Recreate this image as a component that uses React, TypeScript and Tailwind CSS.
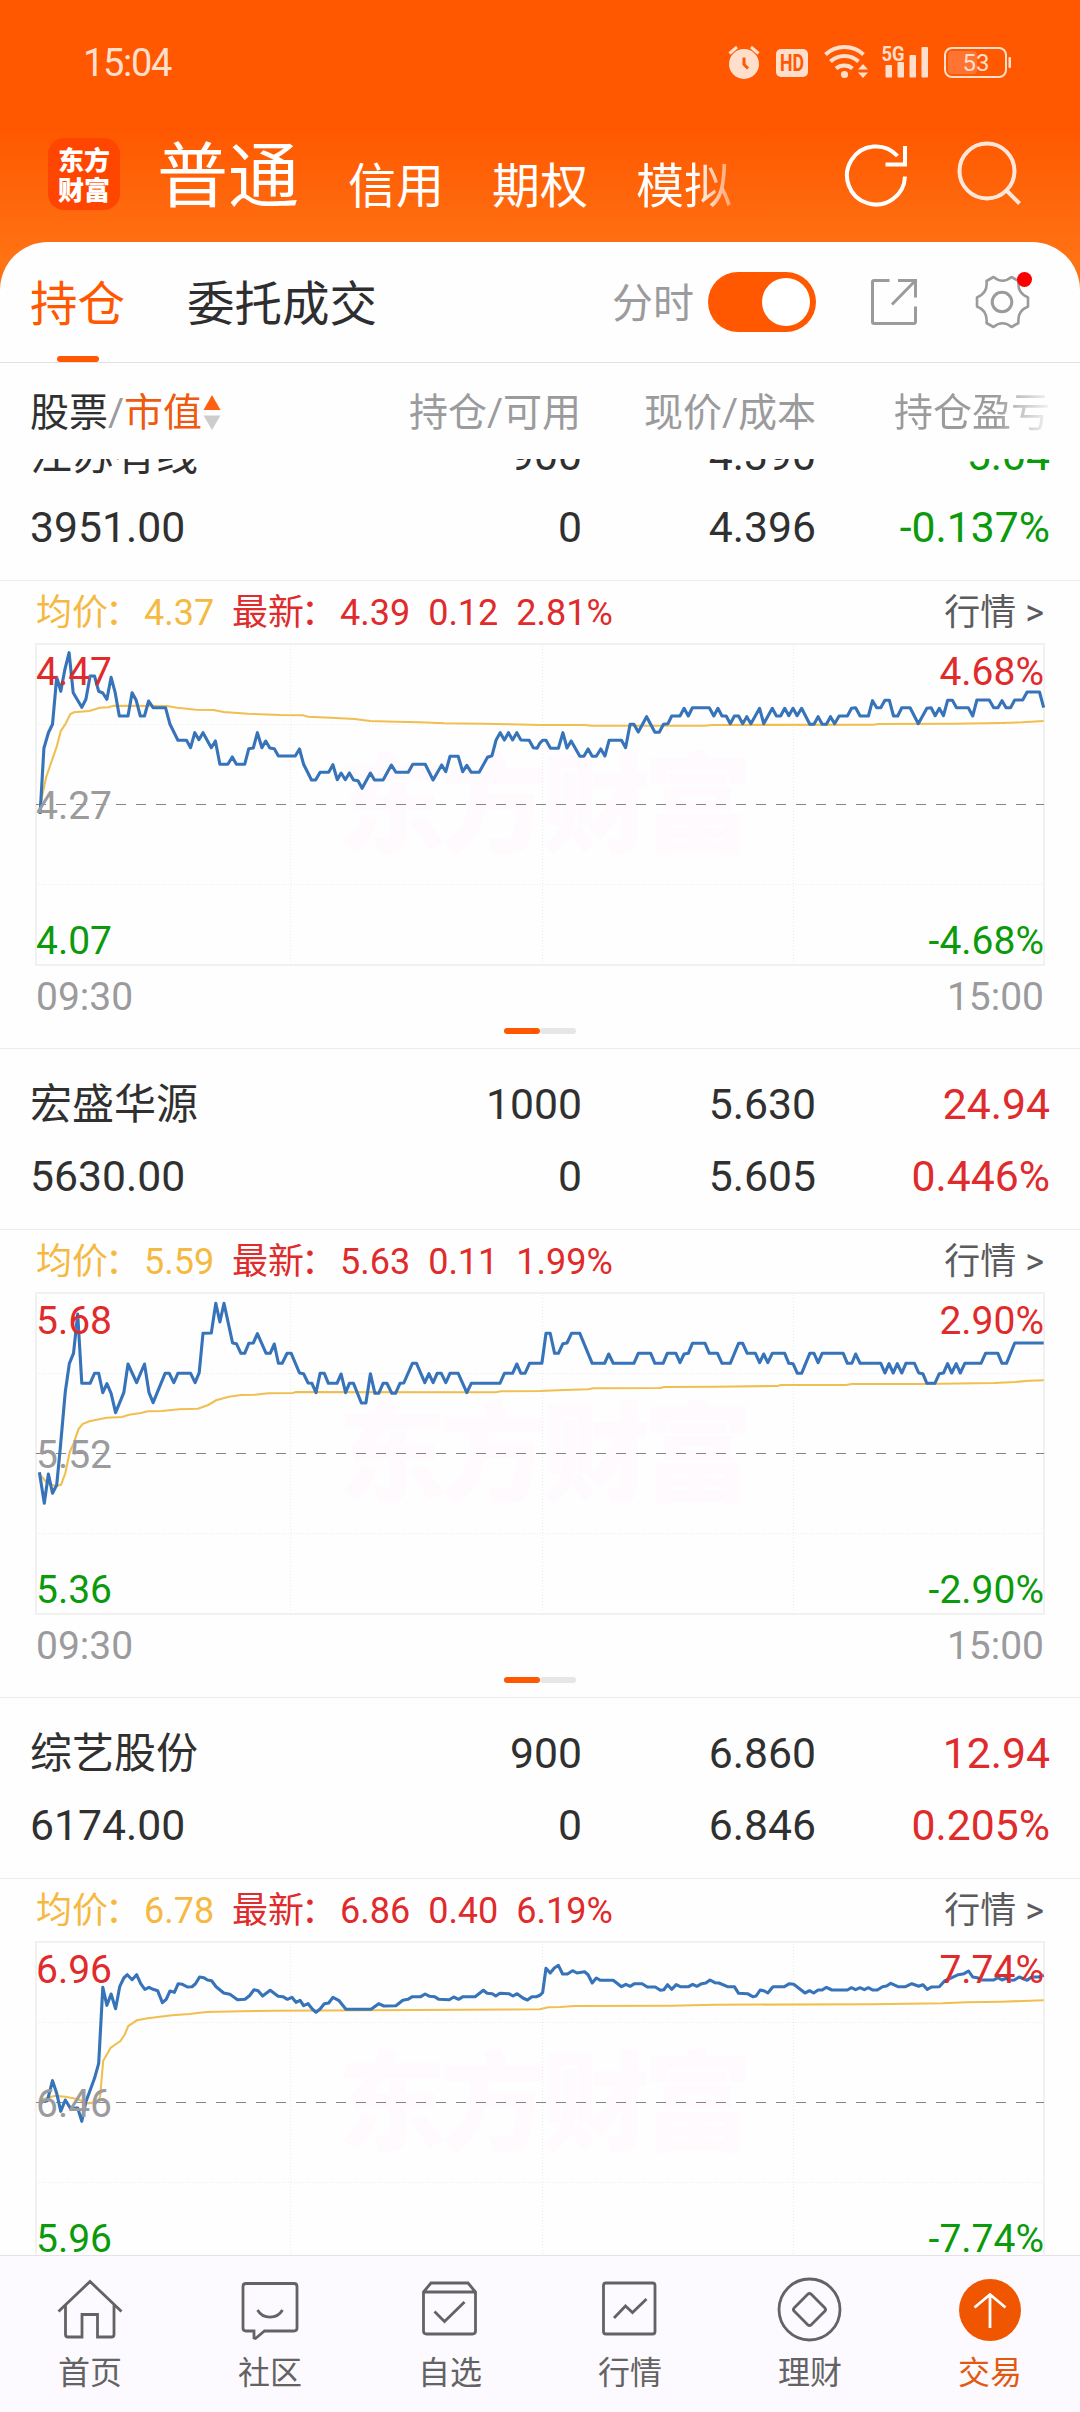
import React from "react";

type Half = string;

interface Holding {
  name: string;
  value: string;
  amount: string;
  usable: string;
  price: string;
  cost: string;
  profit: string;
  rate: string;
  up: boolean;
  avg: string;
  last: string;
  change: string;
  percent: string;
  high: string;
  mid: string;
  low: string;
  span: string;
  baseline: number;
  priceAm: Half;
  pricePm: Half;
  avgAm: Half;
  avgPm: Half;
}

const HOLDINGS: Holding[] = [
  {
    name: "江苏有线",
    value: "3951.00",
    amount: "900",
    usable: "0",
    price: "4.390",
    cost: "4.396",
    profit: "-5.04",
    rate: "-0.137%",
    up: false,
    avg: "4.37",
    last: "4.39",
    change: "0.12",
    percent: "2.81%",
    high: "4.47",
    mid: "4.27",
    low: "4.07",
    span: "4.68%",
    baseline: 219,
    priceAm:
      "117,732 128,535 141,488 153,463 165,322 177,364 189,298 201,248 213,368 238,412 250,388 262,318 275,318 287,364 299,369 311,388 323,322 335,368 347,438 372,438 384,368 396,391 408,438 420,438 432,393 445,413 481,413 494,463 517,511 542,511 554,533 566,488 578,509 590,488 614,533 626,513 639,583 662,583 675,561 687,583 711,583 723,536 736,534 748,488 761,533 772,513 784,534 797,536 809,558 858,558 870,537 882,583 905,630 917,630 930,607 955,607 967,584 980,629 991,609 1003,629 1015,609 1027,630 1040,632 1052,655 1076,609 1088,630 1113,630 1137,585 1150,607 1186,607 1199,583 1235,583 1258,630 1283,585 1295,605 1307,559 1331,559 1344,605 1356,586 1369,607 1392,607 1416,562 1429,557 1441,510 1453,488 1465,510 1477,488 1489,510 1501,488 1513,510 1537,511 1549,533 1560,535 1568,520",
    pricePm:
      "8,511 18,511 31,535 54,535 67,488 79,534 91,513 116,559 128,559 140,537 152,559 164,559 177,537 189,558 201,511 237,511 249,533 262,463 273,463 286,486 310,440 334,487 347,487 359,463 372,461 383,438 407,438 419,415 431,438 443,413 492,413 505,438 517,415 529,438 541,438 553,461 565,438 577,438 589,461 601,440 613,461 638,415 650,461 675,415 687,438 699,438 711,415 723,437 735,415 747,437 760,415 784,463 796,463 808,440 820,463 832,463 844,440 856,461 869,438 893,438 905,415 917,413 930,438 954,438 966,392 978,413 990,413 1002,391 1015,391 1027,438 1039,438 1051,413 1075,413 1099,461 1124,415 1136,413 1148,437 1160,415 1172,437 1184,391 1198,391 1210,413 1244,413 1257,438 1269,390 1305,390 1318,413 1330,413 1342,392 1354,413 1367,413 1379,390 1402,390 1415,366 1451,366 1463,413",
    avgAm:
      "117,705 135,620 165,530 177,483 190,463 205,432 215,427 260,423 290,413 315,412 330,407 485,408 515,413 570,419 620,420 650,426 720,431 815,435 880,436 895,440 960,443 1030,447 1075,453 1150,455 1220,457 1290,460 1400,461 1480,463 1568,465",
    avgPm: "130,465 150,467 480,467 500,465 970,464 980,462 1200,461 1340,459 1400,457 1463,453",
  },
  {
    name: "宏盛华源",
    value: "5630.00",
    amount: "1000",
    usable: "0",
    price: "5.630",
    cost: "5.605",
    profit: "24.94",
    rate: "0.446%",
    up: true,
    avg: "5.59",
    last: "5.63",
    change: "0.11",
    percent: "1.99%",
    high: "5.68",
    mid: "5.52",
    low: "5.36",
    span: "2.90%",
    baseline: 216,
    priceAm:
      "115,757 129,850 141,762 153,820 165,795 175,690 190,515 202,430 214,400 226,282 238,490 262,490 275,460 287,460 299,518 311,491 323,520 336,578 360,518 372,432 397,488 420,432 433,518 445,548 480,460 492,460 505,488 517,460 554,460 567,488 579,458 590,340 614,339 627,250 639,306 651,250 676,369 687,371 700,400 711,400 723,370 736,369 748,341 773,400 785,400 797,372 809,430 820,430 834,400 846,400 870,459 882,461 895,489 906,490 918,518 930,460 942,460 954,490 979,490 991,462 1004,518 1015,490 1027,490 1050,549 1063,549 1076,461 1089,520 1100,520 1113,490 1124,490 1138,520 1149,520 1162,490 1173,489 1198,430 1210,430 1234,488 1246,461 1258,488 1270,460 1282,460 1295,488 1307,460 1331,460 1356,518 1369,490 1452,490 1465,460 1489,460 1501,432 1513,460 1525,460 1538,430 1568,430",
    pricePm:
      "6,430 18,340 30,340 43,400 54,400 67,371 79,369 92,340 116,340 152,430 188,430 200,402 213,430 273,430 286,400 322,400 334,430 358,430 370,400 395,400 407,428 419,402 431,400 443,370 480,370 492,400 516,400 529,430 553,430 577,370 589,370 602,400 626,400 638,428 650,402 662,428 675,400 711,400 723,430 735,431 748,460 760,460 784,400 796,400 808,428 820,400 881,400 893,430 906,430 917,402 930,430 990,430 1002,459 1014,431 1026,459 1038,431 1051,459 1063,430 1088,430 1100,459 1112,461 1124,490 1147,490 1160,461 1172,459 1184,431 1196,459 1209,431 1221,459 1234,430 1281,430 1294,400 1330,400 1342,430 1355,430 1379,369 1463,369",
    avgAm:
      "117,765 140,792 165,798 178,794 190,760 203,695 214,672 228,628 240,612 260,604 310,593 355,591 375,584 410,579 430,574 470,573 520,568 575,566 605,555 628,541 665,530 700,525 740,524 780,520 850,519 860,516 1440,517 1455,514 1568,513",
    avgPm:
      "70,510 140,508 155,505 350,504 360,501 510,500 690,498 700,495 890,495 905,492 1110,492 1320,489 1380,486 1420,482 1463,481",
  },
  {
    name: "综艺股份",
    value: "6174.00",
    amount: "900",
    usable: "0",
    price: "6.860",
    cost: "6.846",
    profit: "12.94",
    rate: "0.205%",
    up: true,
    avg: "6.78",
    last: "6.86",
    change: "0.40",
    percent: "6.19%",
    high: "6.96",
    mid: "6.46",
    low: "5.96",
    span: "7.74%",
    baseline: 213,
    priceAm:
      "117,696 138,692 153,632 165,670 177,724 190,690 205,715 226,714 238,754 250,695 275,625 287,580 299,352 311,406 323,372 336,416 348,350 360,324 370,314 384,329 397,314 409,341 421,358 433,352 445,358 458,362 472,398 483,388 494,363 507,367 518,341 530,343 545,351 558,350 568,341 580,321 592,323 603,330 615,332 628,350 650,369 668,373 690,389 712,388 725,377 738,359 750,362 763,378 785,361 808,379 822,380 835,388 848,382 860,397 872,391 882,407 895,401 908,418 918,427 930,417 942,401 955,399 967,382 985,392 1005,418 1078,418 1100,401 1115,408 1150,407 1170,391 1185,388 1198,380 1222,380 1235,372 1248,379 1262,380 1275,388 1305,389 1318,381 1332,388 1345,380 1380,380 1404,361 1415,370 1430,371 1440,378 1452,370 1478,371 1490,378 1502,371 1520,385 1532,390 1545,380 1558,380 1568,376",
    pricePm:
      "8,368 18,295 30,309 42,294 54,286 66,312 80,312 95,302 108,309 130,305 140,314 152,339 164,324 176,331 213,331 237,350 250,343 262,349 275,341 297,341 312,351 335,351 350,361 360,359 371,344 383,358 396,344 408,350 432,350 444,343 456,349 470,341 482,339 494,330 508,338 520,339 545,350 565,350 577,370 603,371 618,380 628,378 640,360 652,363 662,369 677,350 710,350 725,341 737,343 770,369 783,362 795,369 808,360 820,360 832,352 848,360 893,360 905,353 917,359 930,353 942,359 954,353 966,360 980,360 995,350 1007,348 1019,340 1040,350 1062,350 1080,341 1100,349 1112,344 1125,358 1137,351 1160,350 1175,333 1198,322 1215,314 1232,311 1245,303 1257,321 1270,323 1282,330 1318,330 1330,323 1342,330 1354,325 1366,331 1378,330 1392,321 1415,331 1428,321 1450,321 1463,315",
    avgAm:
      "117,690 160,677 190,680 225,687 255,700 283,696 291,680 300,572 322,533 350,513 362,495 373,468 398,451 430,445 500,436 550,432 600,426 700,424 800,422 1568,418",
    avgPm: "25,412 60,411 100,408 380,407 510,404 960,403 1170,400 1240,397 1340,395 1463,391",
  },
];

// Samples are kept per trading session (morning / afternoon) and joined into one trace.
const X_UNIT = 1568 / 540;
function trace(am: Half, pm: Half, baseline: number) {
  const read = (s: Half, dx: number) =>
    s.split(" ").map((p) => {
      const [x, y] = p.split(",").map(Number);
      return `${((x + dx) / X_UNIT).toFixed(1)},${((y - baseline) / 3).toFixed(1)}`;
    });
  return [...read(am, -105), ...read(pm, 1463)].join(" ");
}

function Chart({ h }: { h: Holding }) {
  return (
    <svg width="1008" height="323" viewBox="0 0 1008 323" className="block overflow-visible">
      <text
        x="509"
        y="201"
        textAnchor="middle"
        textLength="414"
        className="fill-[#fefafe] font-['Noto_Sans_CJK_SC',sans-serif] text-[108px] font-black"
      >
        东方财富
      </text>
      <rect x="0" y="1" width="1008" height="321" fill="none" stroke="#f1f1f2" strokeWidth="2" />
      <g stroke="#ececee" strokeWidth="1" strokeDasharray="1 2">
        <path d="M0 81.5H1008M0 241.5H1008M254.500 0V322M506.500 0V322M757.500 0V322" />
      </g>
      <path d="M0 161.500H1008" stroke="#858587" strokeWidth="1.2" strokeDasharray="10 10" />
      <polyline points={trace(h.avgAm, h.avgPm, h.baseline)} fill="none" stroke="#f0bf50" strokeWidth="2.1" />
      <polyline
        points={trace(h.priceAm, h.pricePm, h.baseline)}
        fill="none"
        stroke="#3673b9"
        strokeWidth="3.1"
        strokeLinejoin="round"
      />
      <g className="text-[39px]">
        <text x="0" y="42" fill="#df2b2b">{h.high}</text>
        <text x="0" y="176" fill="#9b9b9d">{h.mid}</text>
        <text x="0" y="311" fill="#0b9a0b">{h.low}</text>
        <text x="1008" y="42" textAnchor="end" fill="#df2b2b">{h.span}</text>
        <text x="1008" y="311" textAnchor="end" fill="#0b9a0b">-{h.span}</text>
      </g>
    </svg>
  );
}

// Full-width colon set close to the label before it, keeping its full advance.
function Colon() {
  return <span className="inline-block w-[1em] -indent-[3px]">：</span>;
}

function HoldingCard({ h }: { h: Holding }) {
  const tone = h.up ? "text-[#df2b2b]" : "text-[#0b9a0b]";
  const row = "grid h-[72px] grid-cols-[270px_282px_234px_1fr] items-center";
  return (
    <section className="h-[649px] border-b border-[#ececee]">
      <div className="h-[181px] border-b border-[#ececee] px-[30px] pt-[19px] text-[42.7px] leading-[72px] text-[#303030]">
        <div className={row}>
          <span className="relative top-px text-[42px]">{h.name}</span>
          <span className="text-right">{h.amount}</span>
          <span className="text-right">{h.price}</span>
          <span className={`text-right ${tone}`}>{h.profit}</span>
        </div>
        <div className={row}>
          <span>{h.value}</span>
          <span className="text-right">{h.usable}</span>
          <span className="text-right">{h.cost}</span>
          <span className={`text-right ${tone}`}>{h.rate}</span>
        </div>
      </div>
      <div className="px-9">
        <div className="flex h-[62px] justify-between pt-0.5 text-[36px] leading-[60px]">
          <div className="whitespace-pre">
            <span className="text-[#f5b942]">
              均价
              <Colon />
              {`${h.avg}  `}
            </span>
            <span className="text-[#df2b2b]">
              最新
              <Colon />
              {`${h.last}  ${h.change}  ${h.percent}`}
            </span>
          </div>
          <span className="text-[#5c5c5e]">行情 &gt;</span>
        </div>
        <Chart h={h} />
        <div className="flex h-[60px] justify-between pt-px text-[39px] leading-[60px] text-[#9b9b9d]">
          <span>09:30</span>
          <span>15:00</span>
        </div>
        <div className="mt-0.5 flex justify-center">
          <span className="h-1.5 w-9 rounded-full bg-[#ff5800]" />
          <span className="h-1.5 w-9 rounded-full bg-[#e6e6e6]" />
        </div>
      </div>
    </section>
  );
}

function StatusBar() {
  return (
    <div className="flex h-[124px] justify-between pl-[83px] text-[#ffdfcc]">
      <span className="h-[124px] pt-px text-[38px] leading-[124px] tracking-[-1.3px]">15:04</span>
      <svg width="300" height="50" viewBox="720 37 300 50" className="mr-[60px] mt-[37px]" fill="currentColor">
        <circle cx="744" cy="64" r="15" />
        <path d="M729.500 53.500l7.500-6.500M758.500 53.500l-7.500-6.500" stroke="currentColor" strokeWidth="3" />
        <path d="M744 57.500v7l4 4" stroke="#ff5800" strokeWidth="3" fill="none" />
        <rect x="776" y="49" width="32" height="28" rx="5" />
        <text x="792" y="71" textAnchor="middle" fill="#ff5800" textLength="24" lengthAdjust="spacingAndGlyphs" className="text-[23px] font-bold">
          HD
        </text>
        <g fill="none" stroke="currentColor" strokeWidth="4">
          <path d="M825.500 54.500a28 28 0 0 1 38 0" />
          <path d="M830.500 61.500a20.500 20.500 0 0 1 28 0" />
          <path d="M836 68.500a13 13 0 0 1 16.500 0" />
        </g>
        <circle cx="844.500" cy="74.500" r="3.600" />
        <path d="M863 64l5 5.500h-10zM863 78l5-5.500h-10z" />
        <text x="881.500" y="61" textLength="23" lengthAdjust="spacingAndGlyphs" className="text-[21px] font-bold">
          5G
        </text>
        <rect x="885.500" y="65" width="6.500" height="12.500" rx="1" />
        <rect x="897.500" y="62" width="6.500" height="15.500" rx="1" />
        <rect x="909.500" y="55" width="6.500" height="22.500" rx="1" />
        <rect x="921.500" y="47" width="6.500" height="30.500" rx="1" />
        <rect x="945" y="48" width="61" height="29" rx="7" fill="none" stroke="currentColor" strokeWidth="2" />
        <rect x="948" y="51" width="29" height="23" rx="4" fill="#ff7430" />
        <rect x="1008.500" y="57" width="2.500" height="11" rx="1" />
        <text x="976" y="71" textAnchor="middle" className="text-[24px]">53</text>
      </svg>
    </div>
  );
}

function TopNav() {
  return (
    <div className="flex h-[118px] items-start pl-12 text-white">
      <div className="mt-3.5 flex h-[72px] w-[72px] flex-col items-center justify-center rounded-2xl bg-[#ff4600] font-['Noto_Sans_CJK_SC',sans-serif] text-[26px] font-black leading-[30px]">
        <span>东方</span>
        <span>财富</span>
      </div>
      <div className="flex h-[118px] w-[632px] items-start pl-[37px] text-[48px] leading-[72px]">
        <span className="pt-[17px] text-[71px]">普通</span>
        <span className="ml-[49px] pt-[27px]">信用</span>
        <span className="ml-12 pt-[27px]">期权</span>
        <span className="ml-12 mt-[27px] bg-linear-to-r from-white from-60% to-white/40 bg-clip-text text-transparent">模拟</span>
      </div>
      <svg width="190" height="70" viewBox="840 138 190 70" className="ml-[88px] mt-3.5" fill="none" stroke="currentColor">
        <path d="M905 176.500a29 29 0 1 1-7.500-20.500M905 146v18.500h-19.500" strokeWidth="4" />
        <g className="opacity-85">
          <circle cx="987" cy="171" r="27.500" strokeWidth="4" />
          <path d="M1006.500 190.500l13 13" strokeWidth="4" />
        </g>
      </svg>
    </div>
  );
}

function TabRow() {
  return (
    <div className="flex h-[121px] items-center border-b border-[#e2e2e4] pl-[30px] text-[47.5px] leading-[120px]">
      <div className="relative h-[120px] pt-1 leading-[118px] text-[#ff5800]">
        持仓
        <span className="absolute bottom-0 left-[27px] h-1.5 w-[42px] rounded-[3px] bg-[#ff5800]" />
      </div>
      <span className="ml-[62px] h-[120px] pt-1 leading-[118px] text-[#2e2e30]">委托成交</span>
      <span className="ml-[235px] h-[120px] pt-1 text-[41px] leading-[117px] text-[#9b9b9d]">分时</span>
      <span className="ml-3.5 flex h-[60px] w-[108px] items-center justify-end rounded-full bg-[#ff5800] pr-1.5">
        <span className="h-12 w-12 rounded-full bg-white" />
      </span>
      <svg width="170" height="70" viewBox="865 267 170 70" className="ml-[49px]" fill="none" stroke="#9b9b9d" strokeWidth="3">
        <path d="M889.500 280.500h-15.500a1.500 1.500 0 0 0-1.500 1.500v40a1.500 1.500 0 0 0 1.500 1.500h40a1.500 1.500 0 0 0 1.500-1.500v-15.500" />
        <path d="M898 280.500h17.500v17M915 281l-23 23.500" />
        <path
          d="M993.500 277q9 7.500 18 0l7 4q-1.500 12 9.500 16.500v9q-11 4.500-9.500 16.500l-7 4q-9-7.500-18 0l-7-4q1.500-12-9.500-16.500v-9q11-4.500 9.500-16.500z"
          strokeWidth="2.600"
          strokeLinejoin="round"
        />
        <circle cx="1002" cy="302" r="9.800" />
        <circle cx="1024.500" cy="279.500" r="7.500" fill="#fb0000" stroke="none" />
      </svg>
    </div>
  );
}

function TableHead() {
  return (
    <div className="grid h-24 grid-cols-[270px_281px_235px_1fr] items-center px-[30px] pt-1 text-[39px] leading-[92px] text-[#9b9b9d]">
      <div className="flex items-center">
        <span className="text-[#303030]">股票</span>
        <span>/</span>
        <span className="text-[#ee5a10]">市值</span>
        <svg width="18" height="36" viewBox="0 0 18 36" className="ml-px">
          <path d="M9 0l8.500 15H.5z" fill="#ff5f10" />
          <path d="M9 35l8.500-14.500H.5z" fill="#cdcdcf" />
        </svg>
      </div>
      <span className="text-right">持仓/可用</span>
      <span className="text-right">现价/成本</span>
      <span className="ml-auto bg-linear-to-r from-[#9b9b9d] from-65% to-[#9b9b9d]/10 bg-clip-text text-transparent">持仓盈亏</span>
    </div>
  );
}

const TABS: { label: string; icon: React.ReactNode }[] = [
  {
    label: "首页",
    icon: <path d="M8.500 41.500L40 11.500 71.500 41.500M15.500 35V64.500q0 2.500 2.500 2.500H32V44.500H47.500V67H61.500q2.500 0 2.500-2.500V35" />,
  },
  {
    label: "社区",
    icon: (
      <>
        <path d="M16 13.500H64q3 0 3 3V58q0 3-3 3H34.500L25.500 68.500 24 68V61H16q-3 0-3-3V16.500q0-3 3-3z" />
        <path d="M27.500 40a14.500 14.500 0 0 0 25 0" />
      </>
    ),
  },
  {
    label: "自选",
    icon: (
      <>
        <path d="M13.500 22L21 13H58L65.500 22V61q0 3-3 3H16.500q-3 0-3-3zM13.500 22H65.500" />
        <path d="M24.500 41.500L34.500 51.500 54.500 32" />
      </>
    ),
  },
  {
    label: "行情",
    icon: (
      <>
        <rect x="13.500" y="13" width="51.500" height="51" rx="2.500" />
        <path d="M24 48L35.500 36 42.500 42.500 56.500 29" />
      </>
    ),
  },
  {
    label: "理财",
    icon: (
      <>
        <circle cx="39.500" cy="39.500" r="30.500" />
        <rect x="27.500" y="27.500" width="24" height="24" rx="2.500" transform="rotate(45 39.500 39.500)" />
      </>
    ),
  },
  {
    label: "交易",
    icon: (
      <>
        <circle cx="40" cy="40" r="31" fill="#f05500" stroke="none" />
        <path d="M40 58V25M24.500 37.500L40 24.500 55.500 37.500" stroke="#fff" />
      </>
    ),
  },
];

function TabBar() {
  return (
    <nav className="grid h-[157px] shrink-0 grid-cols-6 border-t border-[#e3e3e5] bg-[#fdfaff]">
      {TABS.map((t, i) => (
        <div
          key={t.label}
          className={`flex flex-col items-center pt-3.5 text-[32px] leading-[46px] ${i === 5 ? "text-[#e25a10]" : "text-[#636363]"}`}
        >
          <svg width="80" height="80" viewBox="0 0 80 80" fill="none" stroke="#636363" strokeWidth="2.800">
            {t.icon}
          </svg>
          <span>{t.label}</span>
        </div>
      ))}
    </nav>
  );
}

export default function App() {
  return (
    <div
      lang="zh-CN"
      className="flex h-[2412px] w-[1080px] flex-col overflow-hidden bg-linear-to-b from-[#ff5800] from-[130px] to-[#ff7214] to-[260px] font-['Roboto','Noto_Sans_CJK_SC',sans-serif]"
    >
      <header className="shrink-0">
        <StatusBar />
        <TopNav />
      </header>
      <main className="flex min-h-0 flex-1 flex-col rounded-t-[48px] bg-[#fefefe]">
        <div className="shrink-0">
          <TabRow />
          <TableHead />
        </div>
        <div className="min-h-0 flex-1 overflow-hidden">
          <div className="-mt-[59px]">
            {HOLDINGS.map((h) => (
              <HoldingCard key={h.name} h={h} />
            ))}
          </div>
        </div>
      </main>
      <TabBar />
    </div>
  );
}
